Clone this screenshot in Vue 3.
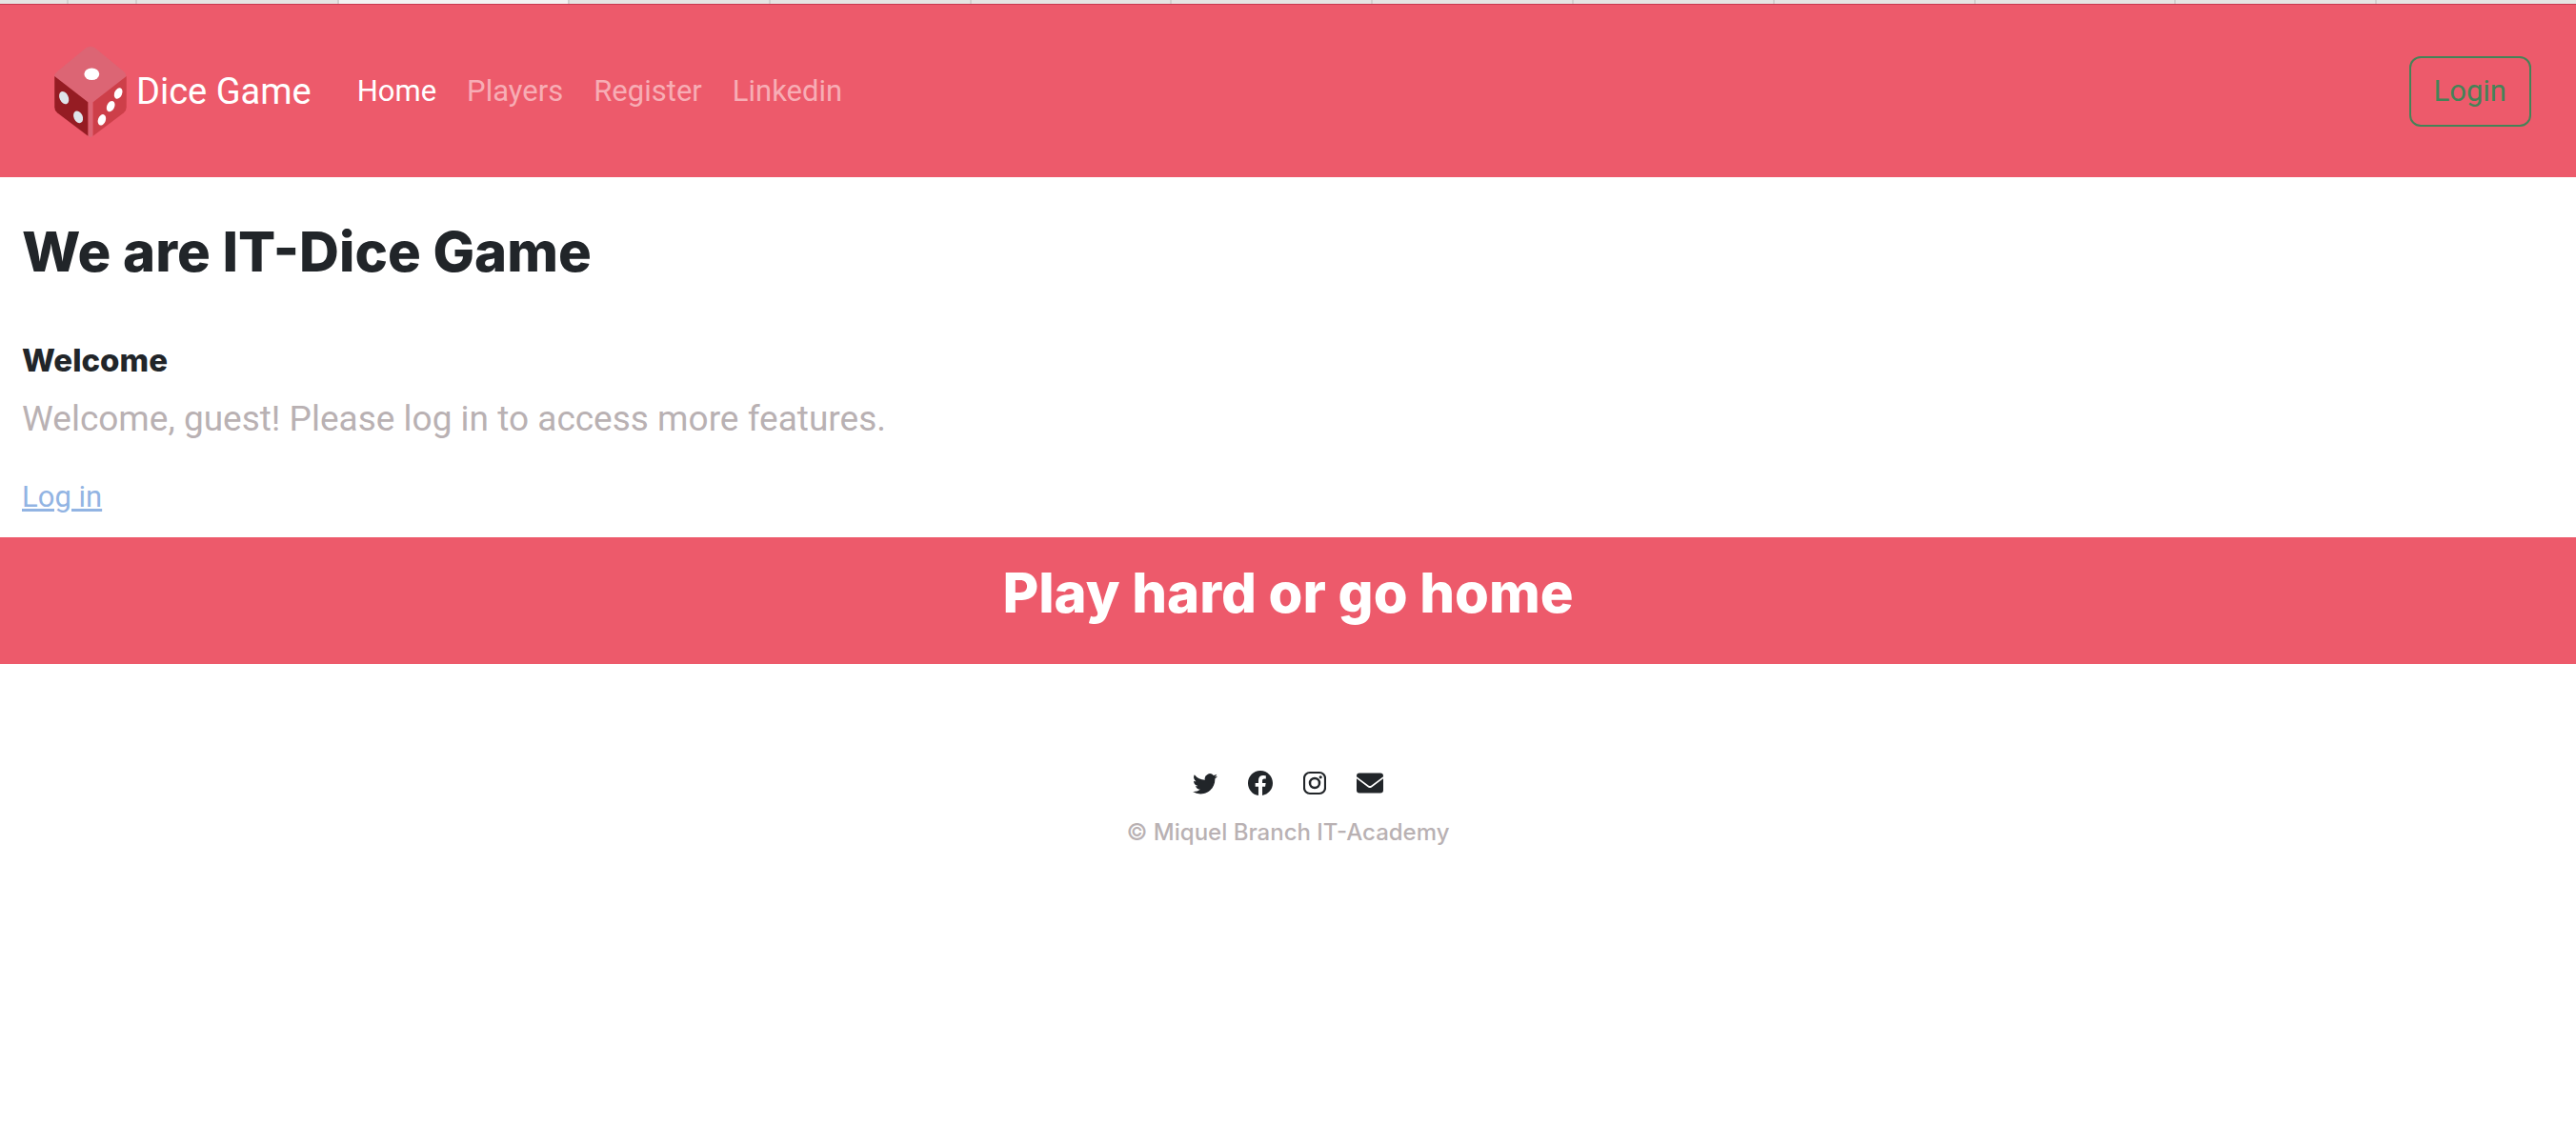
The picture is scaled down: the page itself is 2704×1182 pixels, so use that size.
<script setup>
const tabs = ['pin', 'pin', 'wide', 'active', 'tab', 'tab', 'tab', 'tab', 'tab', 'tab', 'tab', 'tab', 'tab', 'tab']
const links = ['Home', 'Players', 'Register', 'Linkedin']
</script>

<template>
  <div class="page">
    <div class="tabs" aria-hidden="true">
      <span v-for="(kind, i) in tabs" :key="i" :class="kind"></span>
    </div>

    <nav class="navbar">
      <a class="brand" href="#">
        <svg class="dice" viewBox="50 46 232 296" aria-hidden="true">
          <path d="M60 131 L150 57 Q166 45 182 57 L272 131 Q281 139 278 148 L174 229 V334 Q166 345 158 334 V229 L52 148 Q50 139 60 131Z" fill="#dc6574" />
          <path d="M52 146 L158 228 V335 L61 262 Q52 255 52 244Z" fill="#951c23" />
          <path d="M280 146 L174 228 V335 L271 262 Q280 255 280 244Z" fill="#cd3f49" />
          <ellipse cx="170" cy="139" rx="24" ry="19" fill="#fff" />
          <ellipse cx="82" cy="214" rx="14" ry="21" fill="#dfe5eb" transform="rotate(-25 82 214)" />
          <ellipse cx="127" cy="275" rx="14" ry="20" fill="#dfe5eb" transform="rotate(-25 127 275)" />
          <ellipse cx="254" cy="200" rx="12" ry="18" fill="#fff" transform="rotate(25 254 200)" />
          <ellipse cx="230" cy="241" rx="12" ry="18" fill="#fff" transform="rotate(25 230 241)" />
          <ellipse cx="202" cy="284" rx="12" ry="18" fill="#fff" transform="rotate(20 202 284)" />
        </svg>
        <span>Dice Game</span>
      </a>
      <ul class="links">
        <li v-for="(link, i) in links" :key="link">
          <a href="#" :class="{ current: i === 0 }">{{ link }}</a>
        </li>
      </ul>
      <button class="login" type="button">Login</button>
    </nav>

    <main class="content">
      <h1>We are IT-Dice Game</h1>
      <h2>Welcome</h2>
      <p>Welcome, guest! Please log in to access more features.</p>
      <a class="log-in" href="#">Log in</a>
    </main>

    <section class="banner">
      <h1>Play hard or go home</h1>
    </section>

    <footer class="footer">
      <div class="social">
        <a href="#" aria-label="Twitter">
          <svg viewBox="0 0 16 16"><path d="M5.026 15c6.038 0 9.341-5.003 9.341-9.334 0-.14 0-.282-.006-.422A6.685 6.685 0 0 0 16 3.542a6.658 6.658 0 0 1-1.889.518 3.301 3.301 0 0 0 1.447-1.817 6.533 6.533 0 0 1-2.087.793A3.286 3.286 0 0 0 7.875 6.03a9.325 9.325 0 0 1-6.767-3.429 3.289 3.289 0 0 0 1.018 4.382A3.323 3.323 0 0 1 .64 6.575v.045a3.288 3.288 0 0 0 2.632 3.218 3.203 3.203 0 0 1-.865.115 3.23 3.23 0 0 1-.614-.057 3.283 3.283 0 0 0 3.067 2.277A6.588 6.588 0 0 1 .78 13.58a6.32 6.32 0 0 1-.78-.045A9.344 9.344 0 0 0 5.026 15z" /></svg>
        </a>
        <a href="#" aria-label="Facebook">
          <svg viewBox="0 0 16 16"><path d="M16 8.049c0-4.446-3.582-8.05-8-8.05C3.58 0-.002 3.603-.002 8.05c0 4.017 2.926 7.347 6.75 7.951v-5.625h-2.03V8.05H6.75V6.275c0-2.017 1.195-3.131 3.022-3.131.876 0 1.791.157 1.791.157v1.98h-1.009c-.993 0-1.303.621-1.303 1.258v1.51h2.218l-.354 2.326H9.25V16c3.824-.604 6.75-3.934 6.75-7.951z" /></svg>
        </a>
        <a href="#" aria-label="Instagram">
          <svg class="insta" viewBox="1 1 24 24">
            <rect x="2" y="2" width="22" height="22" rx="6" fill="none" stroke="currentColor" stroke-width="2.2" />
            <circle cx="13" cy="13" r="5" fill="none" stroke="currentColor" stroke-width="2.5" />
            <circle cx="19.200" cy="6.800" r="1.600" />
          </svg>
        </a>
        <a href="#" aria-label="Email">
          <svg class="mail" viewBox="0 0 28 26">
            <path d="M3 2.500h22a3 3 0 0 1 3 3v.8l-12.800 9.400q-1.200.8-2.400 0L0 6.300v-.8a3 3 0 0 1 3-3z" />
            <path d="M0 8.200l12.200 9.200q1.800 1.200 3.600 0L28 8.200v12.300a3 3 0 0 1-3 3H3a3 3 0 0 1-3-3z" />
          </svg>
        </a>
      </div>
      <p>© Miquel Branch IT-Academy</p>
    </footer>
  </div>
</template>

<style>
body {
  margin: 0;
  background: #fff;
}
</style>

<style scoped>
.page {
  font-family: Roboto, "Liberation Sans", sans-serif;
  font-size: 31px;
  line-height: 48px;
  color: #212529;
}
h1, h2, p, ul {
  margin: 0;
  padding: 0;
}
.tabs {
  display: flex;
  height: 4px;
  background: #e5e5e3;
}
.tabs span {
  box-sizing: border-box;
  border-right: 2px solid #d2d2d0;
}
.tabs .pin { width: 72px; }
.tabs .wide { width: 212px; }
.tabs .active { width: 242px; background: #f3f3f2; }
.tabs .tab { flex: 1; }
.tabs .tab:last-child { border-right: 0; }

.navbar {
  box-sizing: border-box;
  min-height: 182px;
  padding: 16px 47px 16px 56px;
  display: flex;
  align-items: center;
  background: #ed5a6b;
  border-top: 1px solid #c93a50;
}
.brand {
  display: flex;
  align-items: center;
  gap: 9px;
  margin-right: 32px;
  color: #fff;
  font-size: 38px;
  text-decoration: none;
}
.dice {
  width: 78px;
  height: 98px;
}
.links {
  display: flex;
  flex: 1;
  list-style: none;
}
.links a {
  display: block;
  padding: 16px;
  color: #f7adb5;
  text-decoration: none;
}
.links .current { color: #fff; }
.login {
  padding: 11px 24px;
  border: 2px solid #448357;
  border-radius: 12px;
  background: transparent;
  color: #448357;
  font: inherit;
}

.content {
  display: flex;
  flex-direction: column;
  align-items: flex-start;
  padding: 44px 23px 18px;
}
h1, h2 {
  font-family: Inter, "Liberation Sans", sans-serif;
  font-weight: 800;
}
h1 {
  font-size: 58px;
  line-height: 68px;
}
.content h2 {
  margin-top: 61px;
  font-size: 33px;
  line-height: 38px;
}
.content p {
  margin-top: 13px;
  font-size: 37px;
  line-height: 60px;
  color: #b9b1b3;
}
.log-in {
  margin-top: 28px;
  color: #92b4e3;
  text-decoration: underline;
}

.banner {
  padding: 24px 24px 41px;
  background: #ed5a6b;
  color: #fff;
  text-align: center;
}

.footer {
  padding: 112px 24px 32px;
  text-align: center;
}
.social {
  display: flex;
  justify-content: center;
  gap: 32px;
}
.social a {
  display: flex;
  color: #212529;
}
.social svg {
  width: 26px;
  height: 26px;
  fill: currentColor;
}
.social .insta { width: 24px; }
.social .mail { width: 28px; }
.footer p {
  margin-top: 21px;
  font-family: Inter, "Liberation Sans", sans-serif;
  font-size: 24px;
  font-weight: 500;
  line-height: 36px;
  color: #b9b1b3;
}
</style>
